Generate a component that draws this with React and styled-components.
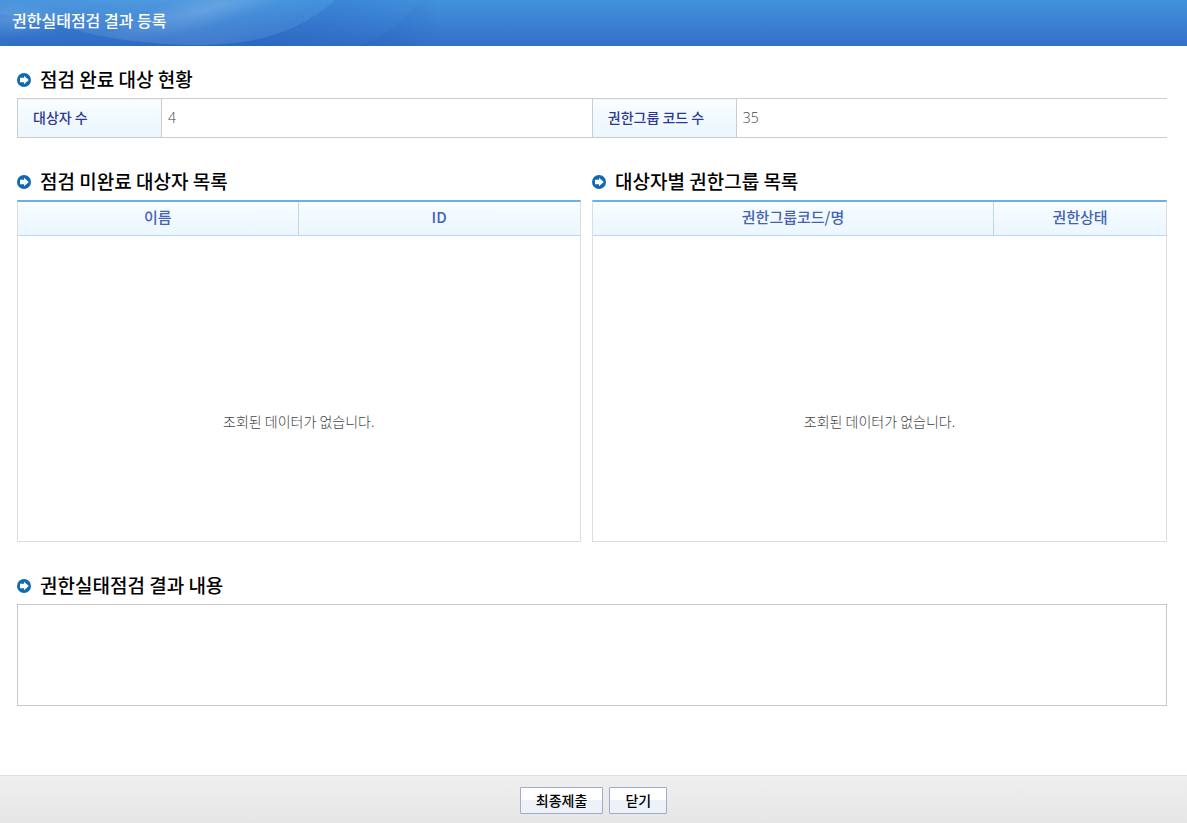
import React from "react";
import styled, { createGlobalStyle } from "styled-components";

const GlobalStyle = createGlobalStyle`
  * {
    box-sizing: border-box;
  }
  body {
    margin: 0;
    background: #fff;
    font-family: "Noto Sans CJK KR", "Noto Sans", sans-serif;
    font-size: 14px;
  }
`;

const Page = styled.div`
  min-height: 100vh;
  display: flex;
  flex-direction: column;
`;
const Header = styled.header`
  position: relative;
  height: 46px;
  padding: 0 12px;
  display: flex;
  align-items: center;
  overflow: hidden;
  background: linear-gradient(#4292dd, #3470c8);
`;
const Waves = styled.svg`
  position: absolute;
  top: 0;
  left: 0;
`;
const PageTitle = styled.h1`
  position: relative;
  margin: 0;
  padding-bottom: 6px;
  font-size: 16px;
  line-height: 24px;
  font-weight: 500;
  color: #fff;
`;
const Content = styled.main`
  flex: 1;
  padding: 20px 20px 30px 17px;
  display: flex;
  flex-direction: column;
  gap: 30px;
`;
const Heading = styled.h2`
  margin: 0 0 6px;
  display: flex;
  align-items: center;
  gap: 9px;
  font-size: 19px;
  line-height: 26px;
  font-weight: 500;
  color: #000;
  svg {
    margin-top: 2px;
  }
`;
const InfoTable = styled.table`
  width: 100%;
  table-layout: fixed;
  border-collapse: collapse;
  th,
  td {
    height: 39px;
    border: 1px solid #ccc;
    text-align: left;
    line-height: 20px;
  }
  th {
    width: 144px;
    padding: 0 15px 3px;
    font-weight: 500;
    color: #2b3990;
    background: linear-gradient(#f8fdff, #ebf6ff);
  }
  td {
    padding: 0 6px;
    font-family: "Open Sans", "Noto Sans", sans-serif;
    font-weight: 300;
    color: #444;
  }
  td:last-child {
    border-right: 0;
  }
`;
const Lists = styled.div`
  display: flex;
  justify-content: space-between;
`;
const ListSection = styled.section`
  width: ${({ $width }) => $width};
`;
const ListTable = styled.table`
  width: 100%;
  table-layout: fixed;
  border-collapse: separate;
  border-spacing: 0;
  border: 1px solid #ddd;
  border-top: 2px solid #6ab1ec;
  th {
    height: 34px;
    padding: 0 0 4px;
    border-bottom: 1px solid #b9d8f5;
    font-size: 15px;
    line-height: 20px;
    font-weight: 500;
    color: #4463b5;
    background: linear-gradient(#f8fdff, #ebf6ff);
  }
  th:not(:last-child) {
    border-right: 1px solid #b9d8f5;
  }
`;
const Empty = styled.td`
  height: 305px;
  padding: 64px 0 0;
  text-align: center;
  line-height: 20px;
  font-weight: 300;
  color: #444;
`;
const ResultInput = styled.textarea`
  display: block;
  width: 100%;
  height: 102px;
  padding: 6px;
  border: 1px solid #c8c8c8;
  border-radius: 0;
  outline: none;
  resize: none;
  font: inherit;
`;
const Footer = styled.footer`
  height: 48px;
  padding-top: 2px;
  display: flex;
  justify-content: center;
  align-items: center;
  gap: 6px;
  border-top: 1px solid #e0e0e0;
  background: linear-gradient(#efefef, #e6e6e6);
`;
const Button = styled.button`
  height: 27px;
  padding: 0 15px 2px;
  border: 1px solid #a0a9cf;
  border-radius: 1px;
  background: linear-gradient(#fff 48%, #edf1f8 48%);
  font-family: inherit;
  font-size: 14px;
  line-height: 20px;
  font-weight: 500;
  color: #000;
  cursor: pointer;
`;

const ArrowIcon = () => (
  <svg width="14" height="14" viewBox="0 0 14 14" aria-hidden="true">
    <circle cx="7" cy="7" r="7" fill="#1269b0" />
    <path d="M3 4.8h4V2.8L11.8 7L7 11.2V9.2H3z" fill="#fff" />
  </svg>
);

const SectionTitle = ({ id, children }) => (
  <Heading id={id}>
    <ArrowIcon />
    {children}
  </Heading>
);

const DataList = ({ id, title, width, columns }) => (
  <ListSection $width={width}>
    <SectionTitle id={id}>{title}</SectionTitle>
    <ListTable aria-labelledby={id}>
      <colgroup>
        {columns.map((col) => (
          <col key={col.name} width={col.width} />
        ))}
      </colgroup>
      <thead>
        <tr>
          {columns.map((col) => (
            <th key={col.name} scope="col">
              {col.name}
            </th>
          ))}
        </tr>
      </thead>
      <tbody>
        <tr>
          <Empty colSpan={columns.length}>조회된 데이터가 없습니다.</Empty>
        </tr>
      </tbody>
    </ListTable>
  </ListSection>
);

const userColumns = [
  { name: "이름", width: "50%" },
  { name: "ID", width: "50%" },
];
const groupColumns = [
  { name: "권한그룹코드/명", width: "70%" },
  { name: "권한상태", width: "30%" },
];

const App = () => {
  return (
    <Page>
      <GlobalStyle />
      <Header>
        <Waves width="700" height="46" viewBox="0 0 700 46" aria-hidden="true">
          <defs>
            <linearGradient id="glow" x1="0" y1="0" x2="1" y2="0">
              <stop offset="0" stopColor="#fff" stopOpacity="0.04" />
              <stop offset="0.6" stopColor="#fff" stopOpacity="0.07" />
              <stop offset="1" stopColor="#fff" stopOpacity="0" />
            </linearGradient>
            <linearGradient id="shade" gradientUnits="userSpaceOnUse" x1="0" y1="0" x2="440" y2="0">
              <stop offset="0" stopColor="#1d55b4" stopOpacity="0.1" />
              <stop offset="0.55" stopColor="#1d55b4" stopOpacity="0.35" />
              <stop offset="1" stopColor="#1d55b4" stopOpacity="0" />
            </linearGradient>
            <linearGradient id="edge" gradientUnits="userSpaceOnUse" x1="370" y1="0" x2="440" y2="0">
              <stop offset="0" stopColor="#1d55b4" stopOpacity="0.18" />
              <stop offset="1" stopColor="#1d55b4" stopOpacity="0" />
            </linearGradient>
            <radialGradient id="shine">
              <stop offset="0" stopColor="#fff" stopOpacity="0.14" />
              <stop offset="1" stopColor="#fff" stopOpacity="0" />
            </radialGradient>
          </defs>
          <path d="M0 46V14C30 18 50 23 70 28C100 38 150 45 200 45C255 45 300 32 335 0H440V46z" fill="url(#shade)" />
          <path d="M0 0H335C300 32 255 45 200 45C150 45 100 38 70 28C50 23 30 18 0 14z" fill="url(#glow)" />
          <path d="M420 0C405 20 385 37 359 46H440V0z" fill="url(#edge)" />
          <ellipse cx="205" cy="10" rx="110" ry="17" transform="rotate(-16 205 10)" fill="url(#shine)" />
          <ellipse cx="10" cy="20" rx="60" ry="18" fill="url(#shine)" />
        </Waves>
        <PageTitle>권한실태점검 결과 등록</PageTitle>
      </Header>
      <Content>
        <section>
          <SectionTitle id="summary">점검 완료 대상 현황</SectionTitle>
          <InfoTable aria-labelledby="summary">
            <tbody>
              <tr>
                <th scope="row">대상자 수</th>
                <td>4</td>
                <th scope="row">권한그룹 코드 수</th>
                <td>35</td>
              </tr>
            </tbody>
          </InfoTable>
        </section>
        <Lists>
          <DataList id="users" title="점검 미완료 대상자 목록" width="49%" columns={userColumns} />
          <DataList id="groups" title="대상자별 권한그룹 목록" width="50%" columns={groupColumns} />
        </Lists>
        <section>
          <SectionTitle id="result">권한실태점검 결과 내용</SectionTitle>
          <ResultInput aria-labelledby="result" />
        </section>
      </Content>
      <Footer>
        <Button type="button">최종제출</Button>
        <Button type="button">닫기</Button>
      </Footer>
    </Page>
  );
};

export default App;
